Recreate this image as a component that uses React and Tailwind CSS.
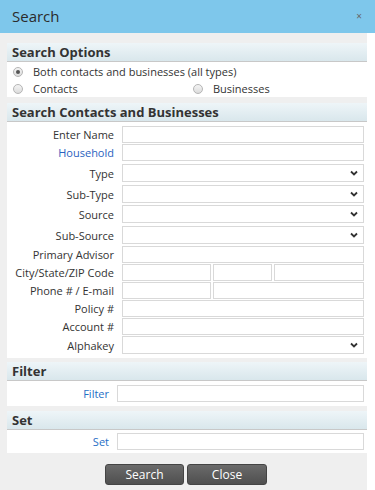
import React from "react";

const font = { fontFamily: '"Open Sans", "Liberation Sans", sans-serif' };

const Chevron = () => (
  <svg width="8" height="6" viewBox="0 0 8 6" className="absolute right-[5px] top-1/2 -translate-y-1/2">
    <path d="M1 1.5 L4 4.5 L7 1.5" fill="none" stroke="#333" strokeWidth="1.8" />
  </svg>
);

const Input = ({ className = "" }) => (
  <div className={`h-[17px] border border-[#d9d9d9] bg-white ${className}`} />
);

const Select = () => (
  <div className="relative h-[18px] border border-[#d9d9d9] bg-white">
    <Chevron />
  </div>
);

const Radio = ({ checked }) => (
  <span className="w-[10px] h-[10px] rounded-full border border-[#b5b5b5] bg-gradient-to-b from-[#f4f4f4] to-[#dcdcdc] flex items-center justify-center shrink-0">
    {checked && <span className="w-[4px] h-[4px] rounded-full bg-[#555]" />}
  </span>
);

const Header = ({ children }) => (
  <div className="h-[19px] px-[5px] flex items-center bg-gradient-to-b from-[#eef5f8] to-[#d9e7ec] border-b border-[#c8c8c8] text-[13px] font-bold text-[#333] leading-none">
    {children}
  </div>
);

const Row = ({ label, blue, children, className = "" }) => (
  <div className={`grid grid-cols-[107px_1fr] gap-x-[8px] items-center ${className}`}>
    <span className={`text-right text-[11px] leading-none ${blue ? "text-[#2a62c0]" : "text-[#333]"}`}>{label}</span>
    {children}
  </div>
);

export default function App() {
  return (
    <div style={font} className="w-[375px] h-[490px] bg-white overflow-hidden">
      <div className="h-[33px] bg-[#7ec7eb] flex items-center justify-between px-[12px]">
        <span className="text-[15px] text-[#2b2b2b]">Search</span>
        <span className="text-[10px] text-[#666] mr-[1px]">×</span>
      </div>
      <div className="w-[367px] h-[457px] bg-[#efefef] pl-[7px] pt-[10px]">
        {/* Search Options */}
        <div className="bg-white">
          <Header>Search Options</Header>
          <div className="pl-[6px] pt-[1px] text-[11px] text-[#333] leading-none">
            <div className="flex items-center gap-[10px] h-[17px]">
              <Radio checked />
              <span>Both contacts and businesses (all types)</span>
            </div>
            <div className="flex items-center h-[17px]">
              <div className="flex items-center gap-[10px] w-[180px]">
                <Radio />
                <span>Contacts</span>
              </div>
              <div className="flex items-center gap-[10px]">
                <Radio />
                <span>Businesses</span>
              </div>
            </div>
          </div>
        </div>

        {/* Search Contacts and Businesses */}
        <div className="bg-white mt-[6px]">
          <Header>Search Contacts and Businesses</Header>
          <div className="pr-[3px] pt-[4px] pb-[4px] flex flex-col">
            <Row label="Enter Name"><Input /></Row>
            <Row label="Household" blue className="mt-[1px]"><Input /></Row>
            <Row label="Type" className="mt-[3px]"><Select /></Row>
            <Row label="Sub-Type" className="mt-[3px]"><Select /></Row>
            <Row label="Source" className="mt-[2px]"><Select /></Row>
            <Row label="Sub-Source" className="mt-[3px]"><Select /></Row>
            <Row label="Primary Advisor" className="mt-[2px]"><Input /></Row>
            <Row label="City/State/ZIP Code" className="mt-[1px]">
              <div className="grid grid-cols-[89px_59px_1fr] gap-x-[2px]">
                <Input /><Input /><Input />
              </div>
            </Row>
            <Row label="Phone # / E-mail" className="mt-[1px]">
              <div className="grid grid-cols-[89px_1fr] gap-x-[2px]">
                <Input /><Input />
              </div>
            </Row>
            <Row label="Policy #" className="mt-[1px]"><Input /></Row>
            <Row label="Account #" className="mt-[1px]"><Input /></Row>
            <Row label="Alphakey" className="mt-[1px]"><Select /></Row>
          </div>
        </div>

        {/* Filter */}
        <div className="bg-white mt-[4px]">
          <Header>Filter</Header>
          <div className="grid grid-cols-[102px_1fr] gap-x-[8px] items-center pr-[3px] pt-[4px] pb-[4px]">
            <span className="text-right text-[11px] leading-none text-[#1f6fc6]">Filter</span>
            <Input />
          </div>
        </div>

        {/* Set */}
        <div className="bg-white mt-[5px]">
          <Header>Set</Header>
          <div className="grid grid-cols-[102px_1fr] gap-x-[8px] items-center pr-[3px] pt-[3px] pb-[3px]">
            <span className="text-right text-[11px] leading-none text-[#1f6fc6]">Set</span>
            <Input />
          </div>
        </div>

        {/* Buttons */}
        <div className="flex justify-center gap-[3px] mt-[11px] pr-[2px]">
          <button className="w-[79px] h-[21px] rounded-[3px] bg-gradient-to-b from-[#6b6b6b] to-[#4f4f4f] border border-[#444] text-white text-[12px] leading-none">
            Search
          </button>
          <button className="w-[80px] h-[21px] rounded-[3px] bg-gradient-to-b from-[#6b6b6b] to-[#4f4f4f] border border-[#444] text-white text-[12px] leading-none">
            Close
          </button>
        </div>
      </div>
    </div>
  );
}
